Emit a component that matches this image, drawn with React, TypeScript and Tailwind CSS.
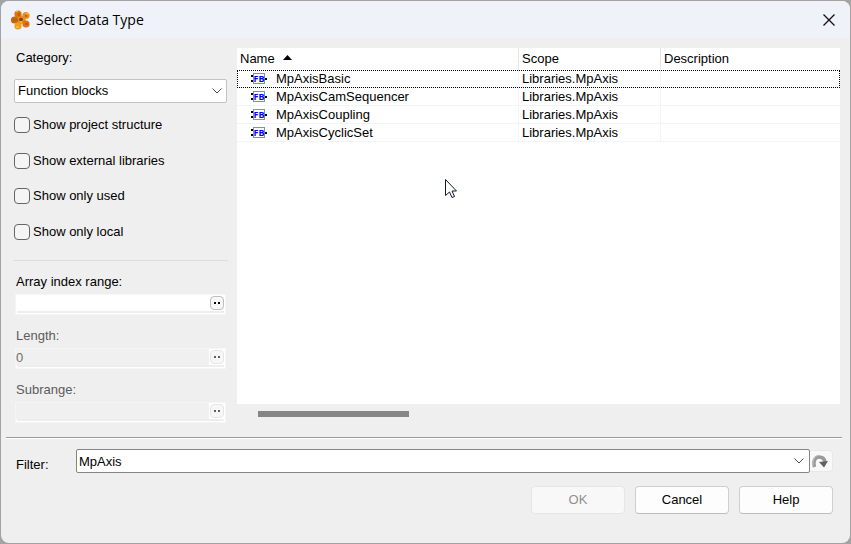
import { useState } from 'react';

const rows = ['MpAxisBasic', 'MpAxisCamSequencer', 'MpAxisCoupling', 'MpAxisCyclicSet'];
const options = ['Show project structure', 'Show external libraries', 'Show only used', 'Show only local'];

function Logo() {
  return (
    <svg width="21" height="22" viewBox="0 0 21 22" aria-hidden="true">
      <path d="M8 6L14 7L16 12L10 16L6 12z" fill="#e58a1e" />
      <circle cx="8" cy="5" r="3.600" fill="#d9740f" />
      <circle cx="16" cy="6.500" r="3.600" fill="#f08a1c" />
      <circle cx="4.500" cy="11" r="3.600" fill="#c2680f" />
      <circle cx="8" cy="17" r="3.600" fill="#eda01e" />
      <circle cx="16" cy="15" r="3.600" fill="#e0701a" />
      <path d="M8 4h2v3H8zM3 10h4v2H3zM15 6h2v2h-2zM15 14h3v2h-3z" fill="#b8620e" />
      <path d="M6 17h3v2H6zM6 2h2v1H6zM16 4h3v1h-3z" fill="#f9b640" />
      <circle cx="11" cy="10.500" r="1.800" fill="#7d3f08" />
      <circle cx="11" cy="13" r="1.200" fill="#f6ac38" />
    </svg>
  );
}

function BlockIcon() {
  return (
    <svg width="16" height="11" viewBox="0 0 16 11" aria-hidden="true">
      <rect x="2.500" y="0.500" width="11" height="10" fill="#fff" stroke="#7c95a3" />
      <path d="M0 2h2v2H0zM0 7h2v2H0zM14 5h2v2h-2z" fill="#000" />
      <text x="8" y="9" textAnchor="middle" fontSize="9" fontWeight="700" fontFamily="Liberation Sans Narrow, Open Sans, sans-serif" fill="#0000ff">FB</text>
    </svg>
  );
}

function Chevron() {
  return (
    <svg width="10" height="6" viewBox="0 0 10 6" fill="none" stroke="#505050" aria-hidden="true">
      <path d="M0.500 0.500L5 5L9.500 0.500" />
    </svg>
  );
}

function RangeField({ id, label, value, disabled }: { id: string; label: string; value: string; disabled?: boolean }) {
  return (
    <div className="flex flex-col gap-1">
      <label htmlFor={id} className={`pl-0.5 leading-4 ${disabled ? 'text-[#5c5c5c]' : 'text-black'}`}>{label}</label>
      <div className="ml-px mr-0.5 flex h-[21px] flex-col border border-[#f5f5f5] bg-white">
        <div className="flex h-4 items-center">
          <input
            id={id}
            defaultValue={value}
            disabled={disabled}
            className="h-full min-w-0 flex-1 bg-white outline-none disabled:bg-[#f0f0f0] disabled:text-[#6d6d6d]"
          />
          <button
            type="button"
            disabled={disabled}
            aria-label={`Edit ${label}`}
            className="mx-px flex h-3.5 w-3.5 items-center justify-center gap-0.5 rounded border border-[#bdbdbd] bg-[#f7f7f7] text-black disabled:border-[#e6e6e6] disabled:text-[#606060]"
          >
            <span className="h-0.5 w-0.5 bg-current" />
            <span className="h-0.5 w-0.5 bg-current" />
          </button>
        </div>
        <div className="mx-px h-0.5 bg-[#eeeeee]" />
      </div>
    </div>
  );
}

export default function App() {
  const [filter, setFilter] = useState('MpAxis');
  const dialogButton = 'h-7 w-[94px] rounded border border-[#cfcfcf] border-b-[#bcbcbc] bg-[#fdfdfd] disabled:border-[#e6e6e6] disabled:bg-[#f8f8f8] disabled:text-[#909090]';
  return (
    <div className="flex min-h-screen flex-col bg-[#a3a3a3] p-px font-['Liberation_Sans',Arial,sans-serif] text-[13px] text-black">
      <div role="dialog" aria-labelledby="title" className="relative flex flex-1 flex-col overflow-hidden rounded-lg bg-[#efefef]">
        <header className="flex h-[37px] items-center justify-between bg-[#f0f2f9] pl-[9px] pr-[15px]">
          <div className="flex items-center gap-[5px]">
            <Logo />
            <h1 id="title" className="font-['Open_Sans','Noto_Sans',sans-serif] text-sm">Select Data Type</h1>
          </div>
          <button type="button" aria-label="Close">
            <svg width="12" height="12" viewBox="0 0 12 12" stroke="#111" strokeWidth="1.300" aria-hidden="true">
              <path d="M0.500 0.500L11.500 11.500M11.500 0.500L0.500 11.500" />
            </svg>
          </button>
        </header>

        <main className="flex flex-1 gap-[9px] pl-[13px] pr-2.5">
          <section className="flex w-[214px] flex-col pt-3">
            <label htmlFor="category" className="pl-0.5 leading-4">Category:</label>
            <div className="relative mr-px mt-[13px]">
              <select id="category" className="h-6 w-full appearance-none rounded-xs border border-[#c3c3c3] bg-white pl-[3px] pr-6 outline-none">
                <option>Function blocks</option>
              </select>
              <span className="pointer-events-none absolute inset-y-0 right-[5px] flex items-center"><Chevron /></span>
            </div>
            <div className="mt-3.5 flex h-[123px] flex-col justify-between">
              {options.map((option) => (
                <label key={option} className="flex h-4 items-center gap-[3px] leading-4">
                  <input type="checkbox" className="h-4 w-4 appearance-none rounded border border-[#666666] bg-[#f5f5f5] checked:bg-[#0067c0]" />
                  {option}
                </label>
              ))}
            </div>
            <hr className="mt-5 border-t border-[#dcdcdc]" />
            <div className="mt-[13px] flex flex-col gap-[13px]">
              <RangeField id="array" label="Array index range:" value="" />
              <RangeField id="length" label="Length:" value="0" disabled />
              <RangeField id="subrange" label="Subrange:" value="" disabled />
            </div>
          </section>

          <section className="flex min-w-0 flex-1 flex-col pt-2.5">
            <div className="flex-1 bg-white">
              <table className="w-full table-fixed border-separate border-spacing-0 text-left">
                <colgroup>
                  <col className="w-[282px]" />
                  <col className="w-[142px]" />
                  <col />
                </colgroup>
                <thead>
                  <tr className="h-[22px]">
                    <th className="border-r border-[#e5e5e5] p-0 pl-[3px] font-normal">
                      <span className="flex items-center gap-2">
                        Name
                        <svg width="9" height="5" viewBox="0 0 9 5" className="mb-1" aria-hidden="true"><path d="M4.500 0L9 5H0z" /></svg>
                      </span>
                    </th>
                    <th className="border-r border-[#e5e5e5] p-0 pl-[3px] font-normal">Scope</th>
                    <th className="p-0 pl-[3px] font-normal">Description</th>
                  </tr>
                </thead>
                <tbody>
                  {rows.map((name, i) => (
                    <tr key={name} className={`h-[18px] leading-4 ${i === 0 ? 'outline-1 -outline-offset-1 outline-dotted outline-black' : ''}`}>
                      <td className="border-b border-r border-[#f2f4f8] p-0 pl-3.5">
                        <span className="flex items-center gap-[9px]"><BlockIcon />{name}</span>
                      </td>
                      <td className="border-b border-r border-[#f2f4f8] p-0 pl-[3px]">Libraries.MpAxis</td>
                      <td className="border-b border-[#f2f4f8] p-0" />
                    </tr>
                  ))}
                </tbody>
              </table>
            </div>
            <div className="mb-5 ml-[21px] mt-[7px] h-1.5 w-[151px] bg-[#868686]" />
          </section>
        </main>

        <footer className="pb-[29px]">
          <hr className="ml-[5px] mr-2 h-0.5 border-b border-t border-b-white border-t-[#9a9a9a]" />
          <div className="mt-2.5 flex items-center pl-[15px] pr-[17px]">
            <label htmlFor="filter" className="w-[60px] pt-1.5">Filter:</label>
            <div className="flex h-6 flex-1 items-center rounded-xs border border-[#858585] bg-white pr-[5px]">
              <input id="filter" value={filter} onChange={(e) => setFilter(e.target.value)} className="h-full min-w-0 flex-1 bg-transparent pl-0.5 outline-none" />
              <button type="button" aria-label="Filter history"><Chevron /></button>
            </div>
            <button type="button" aria-label="Apply filter" className="flex h-[22px] w-[23px] items-center rounded-r border border-l-0 border-[#e8e8e8] bg-[#f8f8f8] pl-0.5">
              <svg width="16" height="14" viewBox="0 0 16 14" aria-hidden="true">
                <path d="M2.500 13C1 8 2.500 3 7 3C10.500 3 12.500 5 13 8" fill="none" stroke="#999" strokeWidth="3.500" />
                <path d="M1 12C0.500 7 2 2.500 6 1.500" fill="none" stroke="#c4c4c4" />
                <path d="M7 8L16 7L12 13.500z" fill="#606060" />
              </svg>
            </button>
          </div>
          <div className="mt-3 flex justify-end gap-2.5 pr-[17px]">
            <button type="button" disabled className={dialogButton}>OK</button>
            <button type="button" className={dialogButton}>Cancel</button>
            <button type="button" className={dialogButton}>Help</button>
          </div>
        </footer>

        <svg width="13" height="20" viewBox="0 0 13 20" className="pointer-events-none absolute left-[444px] top-[178px]" aria-hidden="true">
          <path d="M0.500 0.500V16.500L4.500 13L7 18.500L9.500 17.500L7 12H11.500z" fill="#fff" stroke="#111827" />
        </svg>
      </div>
    </div>
  );
}
